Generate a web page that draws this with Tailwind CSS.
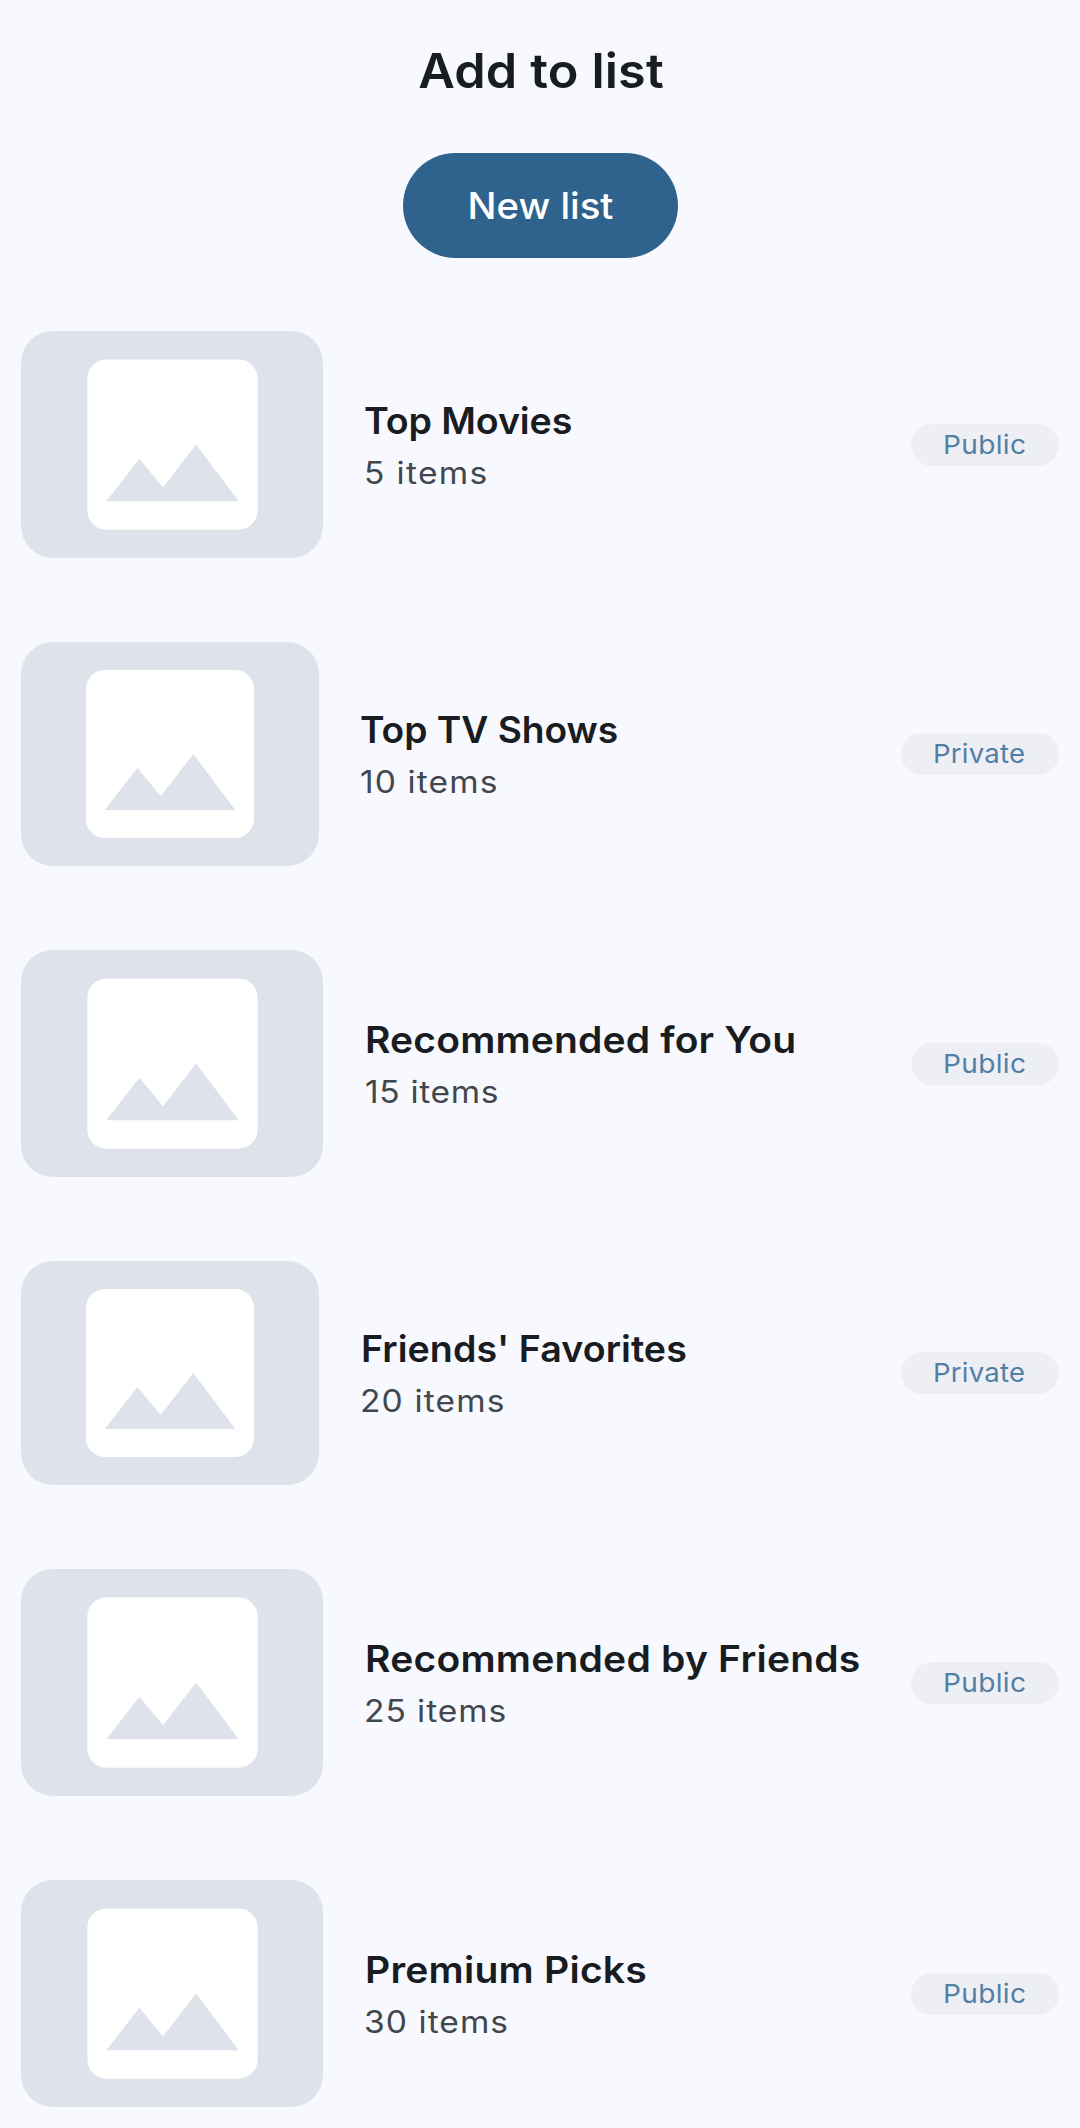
<!DOCTYPE html>
<html lang="en">
<head>
<meta charset="utf-8">
<title>Add to list</title>
<script src="https://cdn.jsdelivr.net/npm/@tailwindcss/browser@4"></script>
</head>
<body class="h-[2128px] overflow-hidden bg-[#f8f9ff] font-['Inter',sans-serif] text-[#191c20]">
<svg class="hidden">
  <symbol id="image" viewBox="0 0 24 24"><path fill="#fff" d="M21 19V5c0-1.1-.9-2-2-2H5c-1.1 0-2 .9-2 2v14c0 1.1.9 2 2 2h14c1.1 0 2-.9 2-2zM8.5 13.5l2.5 3.01L14.5 12l4.5 6H5l3.5-4.5z"/></symbol>
</svg>
<main class="flex flex-col items-center pt-[39px]">
  <h1 class="scale-x-[1.05] pl-0.5 text-[48px] leading-[64px] font-semibold tracking-[0.14px]">Add to list</h1>
  <button class="mt-[50px] flex h-[105px] w-[275px] items-center justify-center rounded-full bg-[#2f628c] pt-0.5 text-[36.5px] font-medium text-white"><span class="scale-x-[1.05]">New list</span></button>
  <ul class="mt-[73px] flex w-full flex-col gap-[84px] px-[21px]">
    <li class="flex items-center">
      <div class="flex h-[227px] w-[302px] shrink-0 justify-center rounded-[32px] bg-[#dde2eb]"><svg class="size-[227px]"><use href="#image"/></svg></div>
      <div class="ml-[41px] grow pt-1 leading-[52px] whitespace-nowrap">
        <h2 class="origin-left scale-x-[1.03] text-[36.5px] font-semibold tracking-[-0.11px]">Top Movies</h2>
        <p class="origin-left scale-x-[1.1] text-[30.5px] tracking-[1.2px] text-[#42474e]">5 items</p>
      </div>
      <span class="h-[42px] w-[148px] shrink-0 rounded-full bg-[#eeeff4] pl-8 text-[26px] leading-[42px] text-[#527fa6]"><span class="block origin-left scale-x-[1.08] tracking-[0.3px]">Public</span></span>
    </li>
    <li class="flex items-center">
      <div class="flex h-[224px] w-[298px] shrink-0 justify-center rounded-[32px] bg-[#dde2eb]"><svg class="size-[224px]"><use href="#image"/></svg></div>
      <div class="ml-[41px] grow pt-1 leading-[52px] whitespace-nowrap">
        <h2 class="origin-left scale-x-[1.02] text-[36.5px] font-semibold tracking-[-0.05px]">Top TV Shows</h2>
        <p class="origin-left scale-x-[1.1] text-[30.5px] tracking-[1px] text-[#42474e]">10 items</p>
      </div>
      <span class="h-[42px] w-[158px] shrink-0 rounded-full bg-[#eeeff4] pl-8 text-[26px] leading-[42px] text-[#527fa6]"><span class="block origin-left scale-x-[1.06] tracking-[0.2px]">Private</span></span>
    </li>
    <li class="flex items-center">
      <div class="flex h-[227px] w-[302px] shrink-0 justify-center rounded-[32px] bg-[#dde2eb]"><svg class="size-[227px]"><use href="#image"/></svg></div>
      <div class="ml-[42px] grow pt-1 leading-[52px] whitespace-nowrap">
        <h2 class="origin-left scale-x-[1.07] text-[36.5px] font-semibold tracking-[0.13px]">Recommended for You</h2>
        <p class="origin-left scale-x-[1.1] text-[30.5px] tracking-[0.6px] text-[#42474e]">15 items</p>
      </div>
      <span class="h-[42px] w-[148px] shrink-0 rounded-full bg-[#eeeff4] pl-8 text-[26px] leading-[42px] text-[#527fa6]"><span class="block origin-left scale-x-[1.08] tracking-[0.3px]">Public</span></span>
    </li>
    <li class="flex items-center">
      <div class="flex h-[224px] w-[298px] shrink-0 justify-center rounded-[32px] bg-[#dde2eb]"><svg class="size-[224px]"><use href="#image"/></svg></div>
      <div class="ml-[42px] grow pt-1 leading-[52px] whitespace-nowrap">
        <h2 class="origin-left scale-x-[1.03] text-[36.5px] font-semibold tracking-[0.06px]">Friends' Favorites</h2>
        <p class="-ml-px origin-left scale-x-[1.1] text-[30.5px] tracking-[1.05px] text-[#42474e]">20 items</p>
      </div>
      <span class="h-[42px] w-[158px] shrink-0 rounded-full bg-[#eeeff4] pl-8 text-[26px] leading-[42px] text-[#527fa6]"><span class="block origin-left scale-x-[1.06] tracking-[0.2px]">Private</span></span>
    </li>
    <li class="flex items-center">
      <div class="flex h-[227px] w-[302px] shrink-0 justify-center rounded-[32px] bg-[#dde2eb]"><svg class="size-[227px]"><use href="#image"/></svg></div>
      <div class="ml-[42px] grow pt-1 leading-[52px] whitespace-nowrap">
        <h2 class="origin-left scale-x-[1.07] text-[36.5px] font-semibold tracking-[0.19px]">Recommended by Friends</h2>
        <p class="-ml-px origin-left scale-x-[1.1] text-[30.5px] tracking-[0.85px] text-[#42474e]">25 items</p>
      </div>
      <span class="h-[42px] w-[148px] shrink-0 rounded-full bg-[#eeeff4] pl-8 text-[26px] leading-[42px] text-[#527fa6]"><span class="block origin-left scale-x-[1.08] tracking-[0.3px]">Public</span></span>
    </li>
    <li class="flex items-center">
      <div class="flex h-[227px] w-[302px] shrink-0 justify-center rounded-[32px] bg-[#dde2eb]"><svg class="size-[227px]"><use href="#image"/></svg></div>
      <div class="ml-[42px] grow pt-1 leading-[52px] whitespace-nowrap">
        <h2 class="origin-left scale-x-[1.07] text-[36.5px] font-semibold tracking-[0.21px]">Premium Picks</h2>
        <p class="-ml-px origin-left scale-x-[1.1] text-[30.5px] tracking-[0.95px] text-[#42474e]">30 items</p>
      </div>
      <span class="h-[42px] w-[148px] shrink-0 rounded-full bg-[#eeeff4] pl-8 text-[26px] leading-[42px] text-[#527fa6]"><span class="block origin-left scale-x-[1.08] tracking-[0.3px]">Public</span></span>
    </li>
  </ul>
</main>
</body>
</html>
